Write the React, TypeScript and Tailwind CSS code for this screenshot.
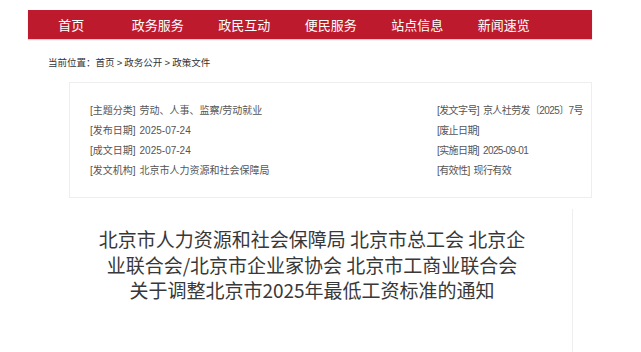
const navItems = ["首页", "政务服务", "政民互动", "便民服务", "站点信息", "新闻速览"];

const leftInfo = [
  { label: "[主题分类]", value: "劳动、人事、监察/劳动就业" },
  { label: "[发布日期]", value: "2025-07-24" },
  { label: "[成文日期]", value: "2025-07-24" },
  { label: "[发文机构]", value: "北京市人力资源和社会保障局" },
];

const rightInfo = [
  { label: "[发文字号]", value: "京人社劳发〔2025〕7号" },
  { label: "[废止日期]", value: "" },
  { label: "[实施日期]", value: "2025-09-01" },
  { label: "[有效性]", value: "现行有效" },
];

const InfoRow = ({ label, value }: { label: string; value: string }) => (
  <div className="h-[20px] leading-[20px] whitespace-nowrap">
    <span className="text-[#555]">{label}</span>
    {value && <span className="ml-[4px] text-[#555]">{value}</span>}
  </div>
);

export default function App() {
  return (
    <div className="min-h-[352px] w-[641px] overflow-hidden bg-white font-['Noto_Sans_CJK_SC',sans-serif]">
      <div className="ml-[28px] w-[564px] pt-[10px]">
        {/* top nav */}
        <nav className="flex h-[29px] items-center bg-[#bd1b2d] shadow-[0_1px_1px_rgba(189,27,45,0.25)]">
          {navItems.map((item) => (
            <a key={item} className="w-[86.5px] text-center text-[13px] leading-[29px] text-white">
              {item}
            </a>
          ))}
        </nav>

        {/* breadcrumb */}
        <div className="pl-[20px] pt-[15px] text-[9.5px] leading-[16px] text-[#333]">
          当前位置：首页 <span className="font-['Liberation_Sans']">&gt;</span> 政务公开{" "}
          <span className="font-['Liberation_Sans']">&gt;</span> 政策文件
        </div>

        {/* info box */}
        <div className="ml-[41px] mt-[11px] flex border border-[#eeeeee] pb-[16px] pl-[20px] pt-[18px] font-['Liberation_Sans','Noto_Sans_CJK_SC',sans-serif] text-[10px]">
          <div className="w-[347px]">
            {leftInfo.map((r) => (
              <InfoRow key={r.label} {...r} />
            ))}
          </div>
          <div className="flex-1 tracking-[-0.6px]">
            {rightInfo.map((r) => (
              <InfoRow key={r.label} {...r} />
            ))}
          </div>
        </div>

        {/* title */}
        <div className="ml-[24px] mt-[11px] h-[160px] w-[521px] border-r border-[#eeeeee] px-[42px] pt-[17px]">
          <h1 className="text-center text-[19px] font-normal leading-[25.5px] text-[#383838]">
            北京市人力资源和社会保障局 北京市总工会 北京企业联合会/北京市企业家协会 北京市工商业联合会
            <br />
            关于调整北京市2025年最低工资标准的通知
          </h1>
        </div>
      </div>
    </div>
  );
}
